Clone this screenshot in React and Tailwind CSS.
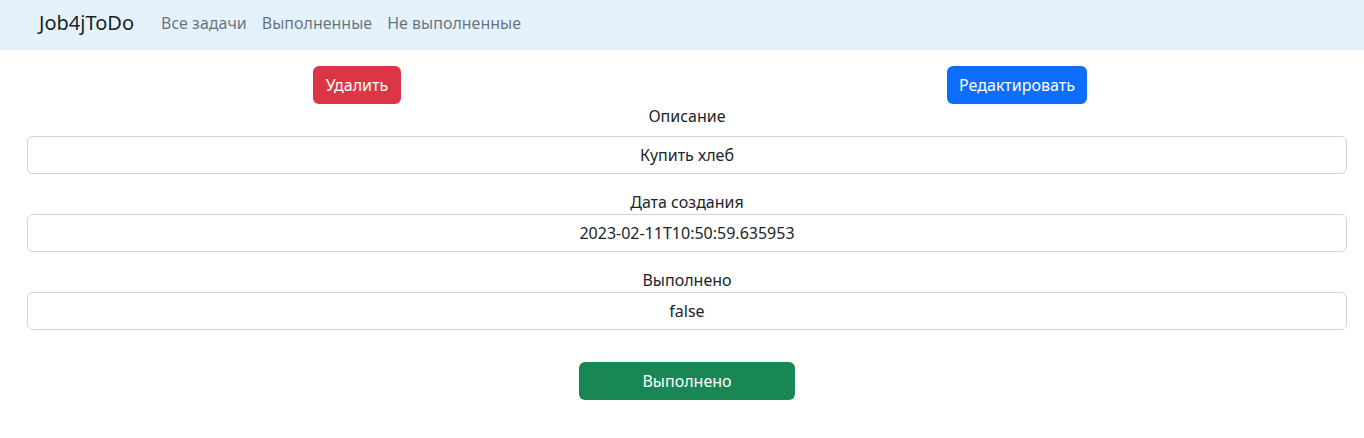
import React from 'react';

const fields = [
  { label: 'Описание', value: 'Купить хлеб', labelClass: 'mb-2' },
  { label: 'Дата создания', value: '2023-02-11T10:50:59.635953', labelClass: 'mt-4' },
  { label: 'Выполнено', value: 'false', labelClass: 'mt-4' },
];

export default function App() {
  return (
    <div className="min-h-[438px] bg-white text-[#212529] font-['Noto_Sans',sans-serif] text-base leading-6">
      <nav className="h-[50px] bg-[#e3f2fd] flex items-center pl-[39px] pb-[5px]">
        <span className="text-[20px] text-black/90 mr-[27px]">Job4jToDo</span>
        <a className="text-black/55 pr-[15px]">Все задачи</a>
        <a className="text-black/55 pr-[15px]">Выполненные</a>
        <a className="text-black/55">Не выполненные</a>
      </nav>

      <div className="ml-[27px] w-[1320px]">
        <div className="flex pt-4">
          <div className="w-1/2 flex justify-center">
            <button className="h-[38px] w-[88px] rounded-md bg-[#dc3545] text-white">Удалить</button>
          </div>
          <div className="w-1/2 flex justify-center">
            <button className="h-[38px] w-[140px] rounded-md bg-[#0d6efd] text-white">Редактировать</button>
          </div>
        </div>

        {fields.map((f) => (
          <div key={f.label}>
            <div className={`text-center h-6 ${f.labelClass}`}>{f.label}</div>
            <div className="h-[38px] border border-[#ced4da] rounded-md flex items-center justify-center">
              {f.value}
            </div>
          </div>
        ))}

        <div className="flex justify-center mt-8">
          <button className="h-[38px] w-[216px] rounded-md bg-[#198754] text-white">Выполнено</button>
        </div>
      </div>
    </div>
  );
}
